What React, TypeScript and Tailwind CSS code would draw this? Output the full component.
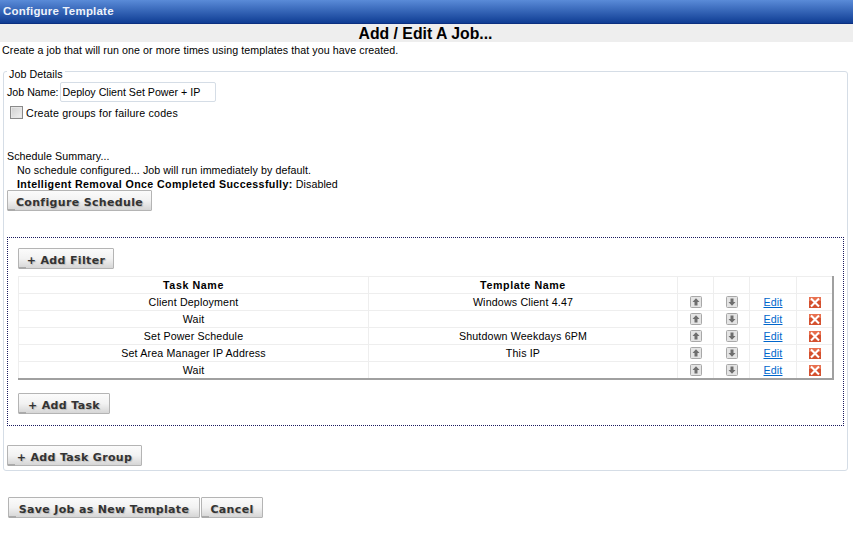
import React from "react";

const rows = [
  { task: "Client Deployment", template: "Windows Client 4.47" },
  { task: "Wait", template: "" },
  { task: "Set Power Schedule", template: "Shutdown Weekdays 6PM" },
  { task: "Set Area Manager IP Address", template: "This IP" },
  { task: "Wait", template: "" },
];

const Btn: React.FC<{ label: string; className?: string }> = ({ label, className = "" }) => (
  <button
    type="button"
    className={`relative flex items-center justify-center h-[21px] pt-[4px] border border-[#b4b4b4] rounded-[1px] bg-gradient-to-b from-[#fbfbfb] via-[#f2f2f2] to-[#d6d6d6] font-['DejaVu_Sans'] text-[11px] font-bold leading-[14px] text-[#333] [text-shadow:1px_1px_1px_#bbb] tracking-[0.34px] ${className}`}
  >
    {label}
    <span className="absolute left-0 bottom-[-1px] w-[7px] h-[2px] bg-[#aaa]" />
  </button>
);

const ArrowBtn: React.FC<{ down?: boolean }> = ({ down }) => (
  <svg width="12" height="12" viewBox="0 0 12 12" className="block mx-auto">
    <rect x="0.5" y="0.5" width="11" height="11" rx="1" fill="#e4e4e4" stroke="#a8a8a8" />
    <path
      d={down ? "M4.5 2.5h3v3.5h2L6 9.7 2.500 6h2z" : "M4.500 9.500h3V6h2L6 2.300 2.500 6h2z"}
      fill="#6e6e6e"
    />
  </svg>
);

const DeleteIcon = () => (
  <svg width="12" height="11" viewBox="0 0 12 11" className="block mx-auto">
    <rect width="12" height="11" fill="#d4502e" />
    <rect width="12" height="4" fill="#e8704f" />
    <path d="M2 1.500 L10 9.500 M10 1.500 L2 9.500" stroke="#fff" strokeWidth="2.100" />
  </svg>
);

export default function App() {
  return (
    <div className="h-[538px] w-[853px] overflow-hidden bg-white font-['Liberation_Sans',Arial,sans-serif] text-[10.667px] tracking-[0.08px] text-black">
      <div className="h-6 bg-gradient-to-b from-[#5a8bd8] to-[#0f3d94] border-b border-[#0b2f80] px-[3px] text-[11.500px] font-bold leading-[23px] text-[#eef3fb] tracking-[0.2px]">
        Configure Template
      </div>
      <h1 className="h-[18px] bg-[#eeeeee] pr-[2px] text-center text-[15.800px] font-bold leading-[20px] tracking-normal">
        Add / Edit A Job...
      </h1>
      <p className="px-[2px] pt-[2px] leading-[13px]">
        Create a job that will run one or more times using templates that you have created.
      </p>

      <fieldset className="relative mx-[3px] mt-[12px] h-[402px] w-[845px] rounded-[3px] border border-[#d5dde6] px-[3px]">
        <legend className="px-[2px] leading-[11px] h-[5px]">
          Job Details
        </legend>
        <div className="flex items-center mt-[6px] h-[23px] gap-[1px]">
          <label className="tracking-normal">Job Name:</label>
          <input
            readOnly
            value="Deploy Client Set Power + IP"
            className="h-5 w-[156px] rounded-[2px] border border-[#d5dde6] px-[2px] tracking-normal outline-none"
          />
        </div>
        <div className="flex items-center h-[19px] pl-[3px] gap-[3px] tracking-[0.18px]">
          <span className="h-[13px] w-[13px] border border-[#8a8a8a] bg-gradient-to-br from-[#cfcfcf] to-[#f2f2f2] shadow-[inset_0_0_0_1px_#e6e6e6]" />
          <span>Create groups for failure codes</span>
        </div>

        <p className="mt-[27px] leading-[14px]">Schedule Summary...</p>
        <p className="pl-[10px] leading-[14px]">
          No schedule configured... Job will run immediately by default.
        </p>
        <p className="pl-[10px] leading-[14px]">
          <b className="tracking-[0.39px]">Intelligent Removal Once Completed Successfully:</b> Disabled
        </p>
        <Btn label="Configure Schedule" className="-mt-[1px] w-[145px]" />

        <div className="mt-[26px] h-[189px] w-[837px] border border-dotted border-[#1a1a5e] px-[10px] pt-[10px]">
          <Btn label="+ Add Filter" className="w-[96px]" />
          <table className="mt-[7px] w-[814px] table-fixed border-collapse border-r-2 border-b-2 border-[#a0a0a0] text-center tracking-[0.16px]">
            <colgroup>
              <col className="w-[350px]" />
              <col className="w-[309px]" />
              <col className="w-[36px]" />
              <col className="w-[36px]" />
              <col className="w-[47px]" />
              <col className="w-[36px]" />
            </colgroup>
            <thead>
              <tr className="h-[17px] border-b border-t border-[#eeeeee] font-bold tracking-[0.6px]">
                <th className="border-l border-r border-[#eeeeee]">Task Name</th>
                <th className="border-r border-[#eeeeee]">Template Name</th>
                <th className="border-r border-[#eeeeee]" />
                <th className="border-r border-[#eeeeee]" />
                <th className="border-r border-[#eeeeee]" />
                <th />
              </tr>
            </thead>
            <tbody>
              {rows.map((row, idx) => (
                <tr key={idx} className="h-[17px] border-b border-[#eeeeee]">
                  <td className="border-l border-r border-[#eeeeee] p-0">{row.task}</td>
                  <td className="border-r border-[#eeeeee] p-0">{row.template}</td>
                  <td className="border-r border-[#eeeeee] p-0"><ArrowBtn /></td>
                  <td className="border-r border-[#eeeeee] p-0"><ArrowBtn down /></td>
                  <td className="border-r border-[#eeeeee] p-0">
                    <a href="#" className="text-[#0066cc] underline">Edit</a>
                  </td>
                  <td className="p-0 pl-[1px]"><DeleteIcon /></td>
                </tr>
              ))}
            </tbody>
          </table>
          <Btn label="+ Add Task" className="mt-[13px] w-[92px]" />
        </div>

        <Btn label="+ Add Task Group" className="mt-[19px] w-[135px]" />
      </fieldset>

      <div className="mt-[26px] flex pl-2 gap-[1px]">
        <Btn label="Save Job as New Template" className="w-[192px]" />
        <Btn label="Cancel" className="w-[62px]" />
      </div>
    </div>
  );
}
